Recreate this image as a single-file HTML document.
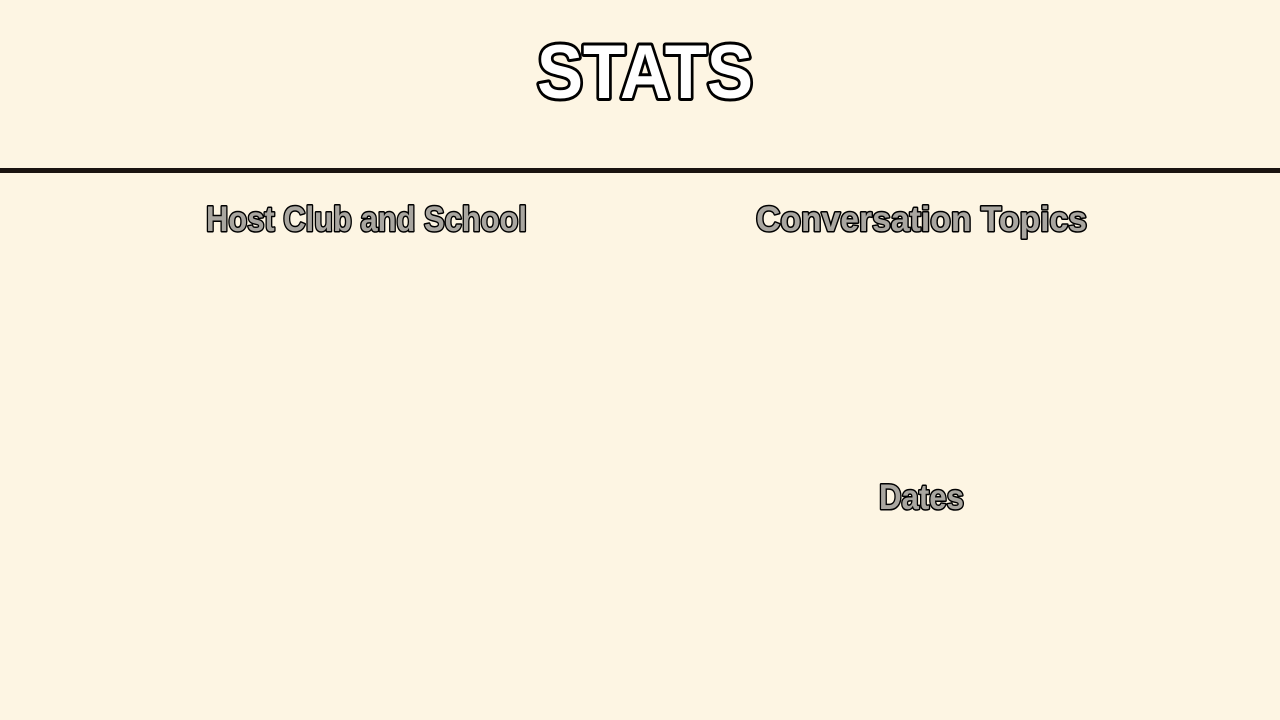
<!DOCTYPE html>
<html><head><style>
html,body{margin:0;padding:0;background:#fdf5e3;width:1280px;height:720px;overflow:hidden}
svg{display:block}
</style></head><body>
<svg width="1280" height="720" xmlns="http://www.w3.org/2000/svg">
<rect width="1280" height="720" fill="#fdf5e3"/>
<text x="537" y="98" font-family="Liberation Sans, sans-serif" font-weight="bold" font-size="76" fill="#fff" stroke="#000" stroke-width="6" paint-order="stroke" stroke-linejoin="round" textLength="216" lengthAdjust="spacingAndGlyphs">STATS</text>
<rect x="0" y="168" width="1280" height="5" fill="#1a1410"/>
<g font-family="Liberation Sans, sans-serif" font-weight="bold" font-size="35" fill="#a9a6a0" stroke="#000" stroke-width="3" paint-order="stroke" stroke-linejoin="round">
<text x="206" y="231" textLength="321" lengthAdjust="spacingAndGlyphs">Host Club and School</text>
<text x="756" y="231" textLength="331" lengthAdjust="spacingAndGlyphs">Conversation Topics</text>
<text x="879" y="509" textLength="85" lengthAdjust="spacingAndGlyphs">Dates</text>
</g>
</svg>
</body></html>
